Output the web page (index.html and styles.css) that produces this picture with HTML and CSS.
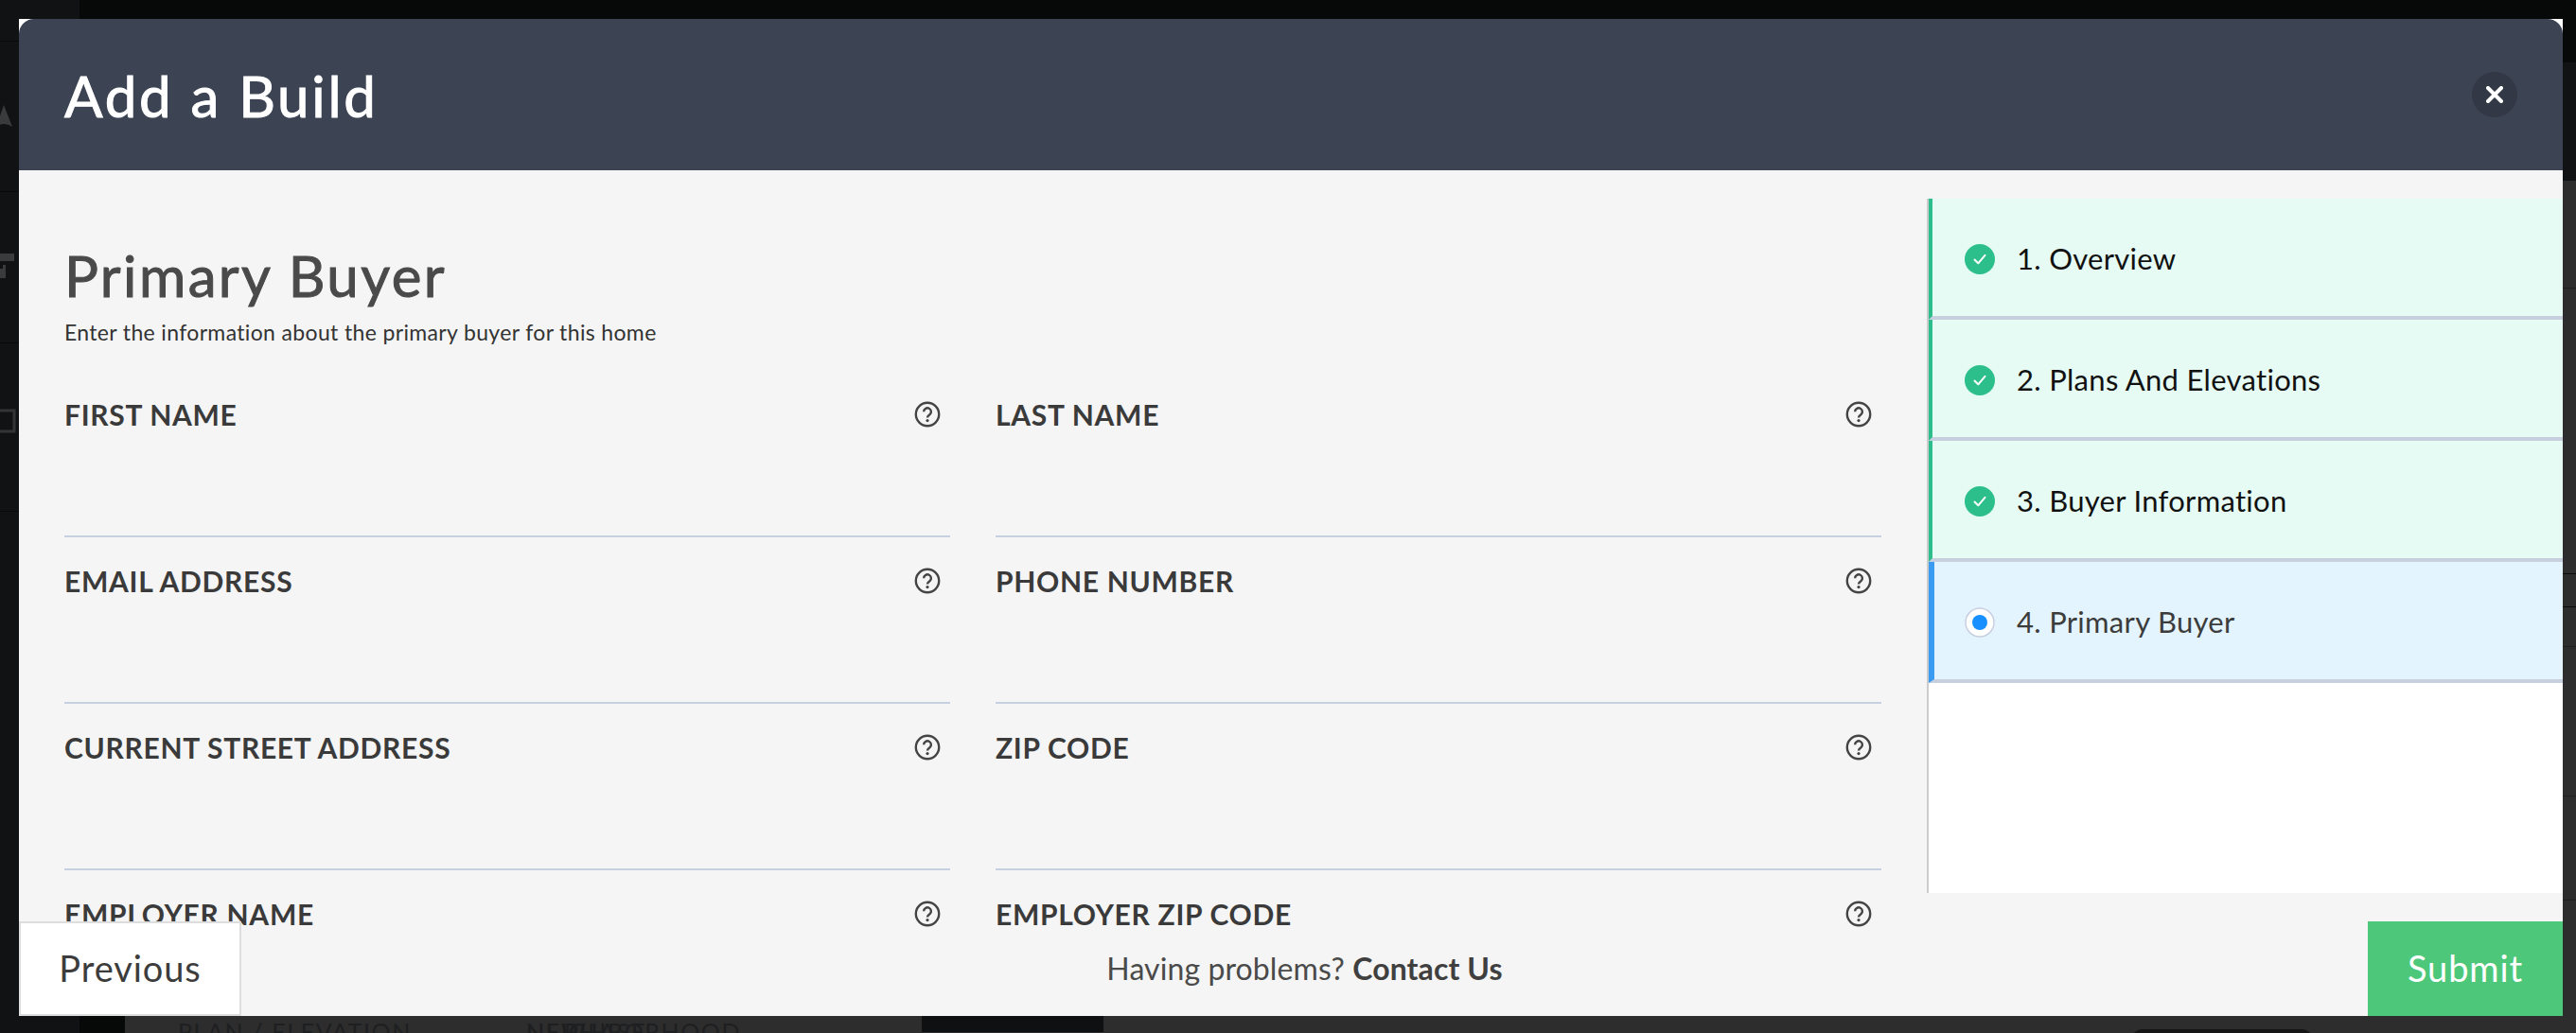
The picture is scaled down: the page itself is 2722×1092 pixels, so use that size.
FILE: index.html
```html
<!DOCTYPE html>
<html lang="en">
<head>
<meta charset="utf-8">
<title>Add a Build</title>
<link rel="stylesheet" href="styles.css">
</head>
<body>
<div class="page">
  <aside class="rail">
    <div class="rail-cell rail-top"></div>
    <div class="rail-cell rail-a">
      <svg class="rail-icon" width="20" height="24" viewBox="0 0 20 24"><path d="M-4 23 L4 0 L13 23 Q4 17 -4 23Z" fill="#3a3b3d"/></svg>
    </div>
    <div class="rail-cell rail-b">
      <svg class="rail-icon" width="20" height="28" viewBox="0 0 20 28"><path d="M-4 2H15V10H-4ZM3 10V18H-4V28H6V14H3" fill="#3a3b3d"/></svg>
    </div>
    <div class="rail-cell rail-c">
      <svg class="rail-icon" width="20" height="26" viewBox="0 0 20 26"><path d="M-4 2H15V24H-4Z" fill="none" stroke="#333436" stroke-width="3"/></svg>
    </div>
  </aside>
  <div class="gutter"></div>
  <main class="main">
    <div class="topbar"></div>
    <div class="band"></div>
    <div class="row row-a"></div>
    <div class="row row-b"><i class="tick tick-1"></i><i class="tick tick-2"></i></div>
    <div class="row row-c"></div>
    <div class="row row-d"></div>
    <div class="bottom">
      <span class="ghost ghost-plan">PLAN / ELEVATION</span>
      <span class="ghost ghost-hood">NEIGHBORHOOD<em class="ghost-over">NEW</em><em class="ghost-over ghost-over-2">PHASE</em></span>
      <span class="dark-block"></span>
      <span class="ghost-bold ghost-dev">DEVELOPER ID</span>
      <span class="ghost-bold ghost-front">FRONT SETBACK</span>
      <span class="thumb"></span>
    </div>
  </main>
</div>

<section class="modal">
  <header class="modal-head">
    <h1 class="modal-title">Add a Build</h1>
    <button class="close" aria-label="Close">
      <svg width="18" height="18" viewBox="0 0 18 18"><path d="M2 2L16 16M16 2L2 16" stroke="#fff" stroke-width="4" stroke-linecap="round"/></svg>
    </button>
  </header>
  <div class="modal-body">
    <div class="form">
      <h2 class="form-title">Primary Buyer</h2>
      <p class="form-sub">Enter the information about the primary buyer for this home</p>
      <div class="fields">
        <div class="field"><div class="field-head"><label class="field-label">FIRST NAME</label><svg class="help" width="28" height="28" viewBox="0 0 28 28"><use href="#q"/></svg></div></div>
        <div class="field"><div class="field-head"><label class="field-label">LAST NAME</label><svg class="help" width="28" height="28" viewBox="0 0 28 28"><use href="#q"/></svg></div></div>
        <div class="field"><div class="field-head"><label class="field-label">EMAIL ADDRESS</label><svg class="help" width="28" height="28" viewBox="0 0 28 28"><use href="#q"/></svg></div></div>
        <div class="field"><div class="field-head"><label class="field-label">PHONE NUMBER</label><svg class="help" width="28" height="28" viewBox="0 0 28 28"><use href="#q"/></svg></div></div>
        <div class="field"><div class="field-head"><label class="field-label">CURRENT STREET ADDRESS</label><svg class="help" width="28" height="28" viewBox="0 0 28 28"><use href="#q"/></svg></div></div>
        <div class="field"><div class="field-head"><label class="field-label">ZIP CODE</label><svg class="help" width="28" height="28" viewBox="0 0 28 28"><use href="#q"/></svg></div></div>
        <div class="field"><div class="field-head"><label class="field-label">EMPLOYER NAME</label><svg class="help" width="28" height="28" viewBox="0 0 28 28"><use href="#q"/></svg></div></div>
        <div class="field"><div class="field-head"><label class="field-label">EMPLOYER ZIP CODE</label><svg class="help" width="28" height="28" viewBox="0 0 28 28"><use href="#q"/></svg></div></div>
      </div>
    </div>
    <nav class="steps">
      <div class="step step-done">
        <svg class="step-icon" width="32" height="32" viewBox="0 0 32 32"><use href="#c"/></svg>
        <span>1. Overview</span>
      </div>
      <div class="step step-done">
        <svg class="step-icon" width="32" height="32" viewBox="0 0 32 32"><use href="#c"/></svg>
        <span>2. Plans And Elevations</span>
      </div>
      <div class="step step-done">
        <svg class="step-icon" width="32" height="32" viewBox="0 0 32 32"><use href="#c"/></svg>
        <span>3. Buyer Information</span>
      </div>
      <div class="step step-current">
        <svg class="step-icon" width="32" height="32" viewBox="0 0 32 32"><circle cx="16" cy="16" r="15" fill="#fff" stroke="#c8cfdf" stroke-width="1.5"/><circle cx="16" cy="16" r="8" fill="#1890ff"/></svg>
        <span>4. Primary Buyer</span>
      </div>
    </nav>
  </div>
  <footer class="modal-foot">
    <button class="btn btn-prev">Previous</button>
    <p class="help-text">Having problems? <strong class="help-link">Contact Us</strong></p>
    <button class="btn btn-submit">Submit</button>
  </footer>
</section>

<svg class="defs" width="0" height="0" aria-hidden="true">
  <defs>
    <g id="q">
      <circle cx="14" cy="14" r="12.2" fill="none" stroke="#444" stroke-width="2.4"/>
      <path d="M10.1 11.2a3.9 3.9 0 1 1 6.3 3.1c-1.5 1.1-2.4 1.6-2.4 3.2" fill="none" stroke="#444" stroke-width="2.4"/>
      <circle cx="14" cy="20.6" r="1.6" fill="#444"/>
    </g>
    <g id="c">
      <circle cx="16" cy="16" r="16" fill="#2cbf8c"/>
      <path d="M10.5 16.5L14.3 20.3L21.5 11.8" fill="none" stroke="#fff" stroke-width="2" stroke-linecap="round" stroke-linejoin="round"/>
    </g>
  </defs>
</svg>
</body>
</html>
```

FILE: styles.css
```css
* { box-sizing: border-box; }
html, body { margin: 0; height: 100%; overflow: hidden; }
body { font-family: "Lato", "Liberation Sans", sans-serif; background: #2d2d2d; }

/* Dimmed page behind the dialog */
.page { display: flex; width: 100%; height: 1092px; overflow: hidden; background: #2d2d2d; }
.rail { width: 84px; flex: none; background: #101214; display: flex; flex-direction: column; }
.rail-cell { border-bottom: 1px solid #08090a; display: flex; align-items: center; }
.rail-top { height: 44px; }
.rail-a { height: 159px; }
.rail-b { height: 160px; }
.rail-c { height: 178px; }
.rail-icon { display: block; overflow: visible; }
.rail-b .rail-icon { margin-top: -6px; }
.rail-c .rail-icon { margin-top: -14px; }
.gutter { width: 48px; flex: none; background: #070808; }
.main { flex: 1; display: flex; flex-direction: column; min-width: 0; }
.topbar { height: 66px; flex: none; background: #070808; }
.band { height: 125px; flex: none; background: #101214; }
.row { flex: none; border-bottom: 1px solid #1f1f1f; position: relative; }
.row-a { height: 114px; }
.row-b { height: 379px; }
.row-c { height: 158px; }
.row-d { height: 110px; }
.tick { position: absolute; right: 0; width: 14px; height: 1px; background: #0c0c0c; }
.tick-1 { top: 301px; }
.tick-2 { top: 336px; }
.bottom {
  flex: 1; display: grid;
  grid-template-columns: 56px 368px 418px 192px 319px 384px 384px 190px 77px;
  grid-template-rows: 139px;
  color: #1e1f21;
}
.ghost { padding-top: 123px; font-size: 25px; letter-spacing: 1.6px; white-space: nowrap; }
.ghost-plan { grid-column: 2; }
.ghost-hood { grid-column: 3; position: relative; }
.ghost-over { position: absolute; left: 0; top: 123px; font-style: normal; }
.ghost-over-2 { left: 40px; }
.dark-block { grid-column: 4; background: #0f1012; }
.ghost-bold { padding-top: 138px; font-size: 22px; font-weight: 700; letter-spacing: 2px; white-space: nowrap; }
.ghost-dev { grid-column: 6; }
.ghost-front { grid-column: 7; }
.thumb { grid-column: 8; margin-top: 136px; height: 20px; background: #151515; border-radius: 10px 10px 0 0; }

/* Dialog */
.modal {
  position: absolute; left: 20px; top: 20px; width: 2688px; height: 1054px;
  background: #fff; display: flex; flex-direction: column; overflow: hidden;
}
.modal-head {
  height: 160px; flex: none; background: #3c4353; border-radius: 16px 16px 0 0;
  display: flex; align-items: center; justify-content: space-between; padding: 0 48px;
}
.modal-title { margin: 2px 0 0; color: #fff; font-size: 60px; font-weight: 400; line-height: 1; letter-spacing: 2.75px; -webkit-text-stroke: 1px #fff; }
.close {
  width: 48px; height: 48px; border: 0; padding: 0; border-radius: 50%; background: #323846;
  display: flex; align-items: center; justify-content: center;
}
.modal-body { flex: 1; min-height: 0; background: #f5f5f5; display: flex; overflow: hidden; }
.form { width: 2016px; flex: none; padding: 76px 48px 0; }
.form-title { margin: 0; color: #4a4a4a; font-size: 60px; font-weight: 400; line-height: 70px; letter-spacing: 2.4px; -webkit-text-stroke: 1px #4a4a4a; }
.form-sub { margin: 10px 0 0; color: #333; font-size: 23px; line-height: 30px; letter-spacing: 0.35px; }
.fields { display: grid; grid-template-columns: 936px 936px; column-gap: 48px; margin-top: 26px; }
.field { height: 176px; border-bottom: 2px solid #c6d0e0; padding-top: 30px; }
.field-head { display: flex; align-items: center; justify-content: space-between; height: 32px; padding-right: 10px; }
.field-label { color: #3a3a3a; font-size: 30px; font-weight: 700; line-height: 32px; letter-spacing: 0.7px; white-space: nowrap; }
.help { display: block; flex: none; }
.steps {
  flex: 1; margin-top: 30px; height: 734px; background: #fff; border-left: 2px solid #ccc;
  display: flex; flex-direction: column;
}
.step {
  height: 128px; flex: none; display: flex; align-items: center; gap: 23px;
  padding: 3px 0 0 34px; border-bottom: 4px solid #c8cfdf; font-size: 31px; line-height: 1; letter-spacing: 0.3px;
}
.step-done { background: #e6fbf4; border-left: 4px solid #2cbf8c; color: #111; }
.step-current { background: #e4f4fe; border-left: 6px solid #3b9bf0; padding-left: 32px; color: #3c3c3c; }
.step-icon { display: block; flex: none; }
.modal-foot {
  position: absolute; left: 0; right: 0; bottom: 0; height: 100px;
  display: flex; align-items: stretch; justify-content: space-between;
}
.btn { border: 0; margin: 0; padding: 0 0 2px; font-family: inherit; font-size: 38px; font-weight: 400; letter-spacing: 0.9px; }
.btn-prev { width: 235px; background: #fff; border: 2px solid #ddd; color: #3c3c3c; }
.btn-submit { width: 206px; background: #4dc87b; color: #fff; }
.help-text { margin: 0; align-self: center; color: #4a4a4a; font-size: 32px; line-height: 1; letter-spacing: 0.1px; }
.help-link { font-weight: 700; color: #3f3f3f; }
.defs { position: absolute; }
```
